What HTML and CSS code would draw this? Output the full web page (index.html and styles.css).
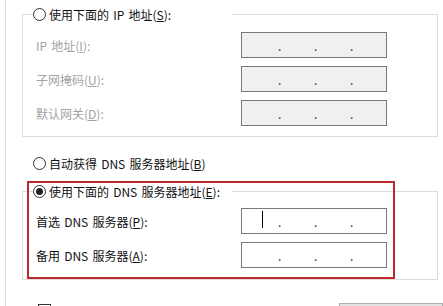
FILE: index.html
```html
<!DOCTYPE html>
<html lang="zh-CN">
<head>
  <meta charset="UTF-8" />
  <meta name="viewport" content="width=device-width, initial-scale=1.0" />
  <title>Internet 协议版本 4 (TCP/IPv4) 属性</title>
  <link rel="stylesheet" href="styles.css">
</head>
<body>

  <div class="page">

    <fieldset class="group">
      <legend class="group-title">
        <span class="radio"></span>
        <span>使用下面的 IP 地址(<u>S</u>):</span>
      </legend>
      <div class="row disabled">
        <span class="label">IP 地址(<u>I</u>):</span>
        <span class="ip-box"><i class="dot">.</i><i class="dot">.</i><i class="dot">.</i></span>
      </div>
      <div class="row disabled">
        <span class="label">子网掩码(<u>U</u>):</span>
        <span class="ip-box"><i class="dot">.</i><i class="dot">.</i><i class="dot">.</i></span>
      </div>
      <div class="row disabled">
        <span class="label">默认网关(<u>D</u>):</span>
        <span class="ip-box"><i class="dot">.</i><i class="dot">.</i><i class="dot">.</i></span>
      </div>
    </fieldset>

    <div class="option">
      <span class="radio"></span>
      <span>自动获得 DNS 服务器地址(<u>B</u>)</span>
    </div>

    <div class="dns-wrap">
      <fieldset class="group">
        <legend class="group-title">
          <span class="radio checked"></span>
          <span>使用下面的 DNS 服务器地址(<u>E</u>):</span>
        </legend>
        <div class="row">
          <span class="label">首选 DNS 服务器(<u>P</u>):</span>
          <span class="ip-box"><span class="caret"></span><i class="dot">.</i><i class="dot">.</i><i class="dot">.</i></span>
        </div>
        <div class="row">
          <span class="label">备用 DNS 服务器(<u>A</u>):</span>
          <span class="ip-box"><i class="dot">.</i><i class="dot">.</i><i class="dot">.</i></span>
        </div>
      </fieldset>
      <!-- red annotation frame drawn over the dialog -->
      <div class="highlight"></div>
    </div>

    <div class="footer">
      <span class="checkbox"></span>
      <button class="btn" aria-label="高级"></button>
    </div>

  </div>

</body>
</html>
```

FILE: styles.css
```css
/* Reset */
* {
  box-sizing: border-box;
  margin: 0;
  padding: 0;
}

html, body {
  background: #fff;
  overflow: hidden;
}

body {
  font-family: "Noto Sans CJK SC", "Noto Sans", sans-serif;
  font-size: 12px;
  line-height: 17px;
  word-spacing: 1.5px;
  color: #111;
}

u {
  text-decoration: underline;
  text-underline-offset: 1px;
}

/* Dialog body */
.page {
  margin-left: 5px;
  border-left: 1px solid #dedede;
  padding: 6px 0 0 16px;
  height: 306px;
}

/* Group boxes */
.group {
  width: 416px;
  border: 1px solid #dcdcdc;
  padding: 9px 0 10px 13px;
  display: flex;
  flex-direction: column;
  gap: 8px;
}

.dns-wrap {
  position: relative;
  margin-top: 11px;
}

.dns-wrap .group {
  padding: 8px 0 11px 13px;
}

.group-title {
  display: flex;
  align-items: center;
  gap: 3px;
  width: 199px;
  height: 17px;
  margin-left: -3px;
  padding: 0;
}

/* Radio, checkbox */
.radio {
  flex: 0 0 13px;
  width: 13px;
  height: 13px;
  border: 1px solid #333;
  border-radius: 50%;
  background: #fff;
  display: flex;
  align-items: center;
  justify-content: center;
}

.radio.checked::after {
  content: "";
  width: 7px;
  height: 7px;
  border-radius: 50%;
  background: #222;
}

.option {
  display: flex;
  align-items: center;
  gap: 3px;
  height: 17px;
  margin: 18px 0 0 11px;
}

/* Rows */
.row {
  display: flex;
  align-items: center;
  height: 26px;
}

.label {
  flex: 0 0 205px;
}

.row.disabled .label {
  color: #a3a3a3;
}

.ip-box {
  position: relative;
  width: 146px;
  height: 26px;
  border: 1px solid #7a7a7a;
  background: #fff;
  display: flex;
  align-items: center;
  gap: 33px;
  padding: 2px 0 0 36px;
  line-height: 12px;
}

.row.disabled .ip-box {
  background: #f0f0f0;
}

.dot {
  font-style: normal;
  display: inline-block;
  width: 3px;
  text-align: center;
  color: #333;
}

.caret {
  position: absolute;
  left: 20px;
  top: 2px;
  width: 1px;
  height: 17px;
  background: #000;
}

.highlight {
  position: absolute;
  left: 5px;
  top: -2px;
  width: 368px;
  height: 98px;
  border: 2px solid #c0282e;
  pointer-events: none;
}

/* Footer: only the top edge shows in the frame */
.footer {
  display: flex;
  align-items: flex-start;
  margin-top: 23px;
  padding-left: 16px;
}

.checkbox {
  width: 13px;
  height: 13px;
  margin-top: 1px;
  border: 1px solid #333;
  background: #fff;
}

.btn {
  margin-left: auto;
  width: 104px;
  height: 23px;
  border: 1px solid #adadad;
  background: #e1e1e1;
}
```
